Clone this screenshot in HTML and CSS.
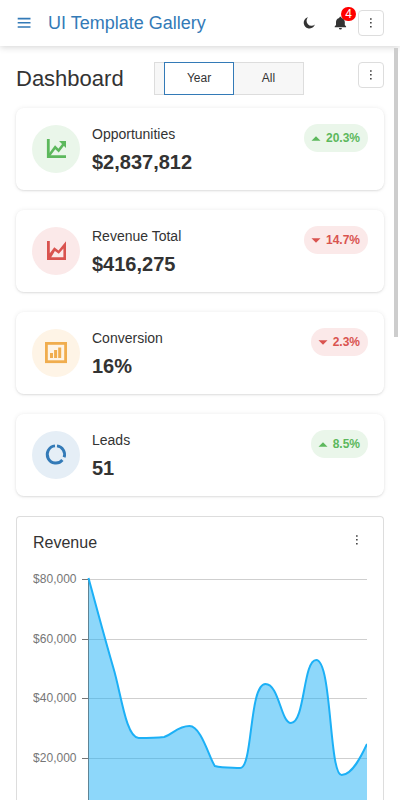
FILE: index.html
```html
<!DOCTYPE html>
<html lang="en">
<head>
<meta charset="utf-8">
<title>UI Template Gallery</title>
<link rel="stylesheet" href="styles.css">
</head>
<body>
<header class="topbar">
  <svg class="menu" width="16" height="16" viewBox="0 0 16 16"><path d="M1.7 3.6h12.8M1.7 7.8h12.8M1.7 12h12.8" stroke="#337ab7" stroke-width="1.6"/></svg>
  <div class="brand">UI Template Gallery</div>
  <svg class="moon" width="14" height="14" viewBox="0 0 14 14"><path d="M6.1 1.2A5.7 5.7 0 1 0 12.9 8.4A4.5 4.5 0 0 1 6.1 1.2Z" fill="#333"/></svg>
  <div class="bell">
    <svg width="14" height="16" viewBox="0 0 14 16"><path d="M7.4 1.7c.7 0 1.1.5 1.1 1.2C10.7 3.4 11.8 5 11.8 7v3l1.3 1.4v.9H1.7v-.9L3 10V7c0-2 1.1-3.6 3.3-4.1 0-.7.4-1.2 1.1-1.2ZM5.9 13h3a1.5 1.5 0 0 1-3 0Z" fill="#333"/></svg>
    <span class="count">4</span>
  </div>
  <button class="more" aria-label="More"><svg width="4" height="12" viewBox="0 0 4 12"><path d="M1.1 1.2h1.5v1.5H1.1zM1.1 5.1h1.5v1.5H1.1zM1.1 9h1.5v1.5H1.1z" fill="#333"/></svg></button>
</header>
<main>
  <div class="heading">
    <h1>Dashboard</h1>
    <div class="tabs"><span class="stub"></span><span class="tab active">Year</span><span class="tab">All</span></div>
    <button class="more" aria-label="More"><svg width="4" height="12" viewBox="0 0 4 12"><path d="M1.1 1.2h1.5v1.5H1.1zM1.1 5.1h1.5v1.5H1.1zM1.1 9h1.5v1.5H1.1z" fill="#333"/></svg></button>
  </div>
  <section class="card">
    <div class="icon green"><svg width="24" height="24" viewBox="0 0 24 24"><path d="M4.3 2v17.6H22" fill="none" stroke="#5cb85c" stroke-width="2.8"/><path d="M5 18.5L11.2 10.3L14.6 13.6L19.7 7" fill="none" stroke="#5cb85c" stroke-width="2.6"/><path d="M15 4H22v7Z" fill="#5cb85c"/></svg></div>
    <div class="info"><div class="name">Opportunities</div><div class="value">$2,837,812</div></div>
    <div class="pill green"><svg width="10" height="5" viewBox="0 0 10 5"><path d="M.5 4.7L5 .3l4.5 4.4Z" fill="#5cb85c"/></svg>20.3%</div>
  </section>
  <section class="card">
    <div class="icon red"><svg width="24" height="24" viewBox="0 0 24 24"><path d="M3 2h2.8v12.2L10.3 8.2l4.2 3.2L22 2.3V21H3ZM7.2 18.3h12.2V9.4L14.8 14.8l-3.9-2.7Z" fill="#d9534f" fill-rule="evenodd"/></svg></div>
    <div class="info"><div class="name">Revenue Total</div><div class="value">$416,275</div></div>
    <div class="pill red"><svg width="10" height="5" viewBox="0 0 10 5"><path d="M.5 .3h9L5 4.7Z" fill="#d9534f"/></svg>14.7%</div>
  </section>
  <section class="card">
    <div class="icon orange"><svg width="24" height="24" viewBox="0 0 24 24"><rect x="2.4" y="2.4" width="19.2" height="18.3" fill="none" stroke="#f0ad4e" stroke-width="2.8"/><path d="M6 11.9h3V17H6zM10.1 9.1h3V17h-3zM14.2 6.5h3V17h-3z" fill="#f0ad4e"/></svg></div>
    <div class="info"><div class="name">Conversion</div><div class="value">16%</div></div>
    <div class="pill red"><svg width="10" height="5" viewBox="0 0 10 5"><path d="M.5 .3h9L5 4.7Z" fill="#d9534f"/></svg>2.3%</div>
  </section>
  <section class="card">
    <div class="icon blue"><svg width="24" height="24" viewBox="0 0 24 24"><path d="M13 2.9A8.6 8.6 0 0 1 20.1 14.3M18.4 17A8.6 8.6 0 1 1 11 2.9" fill="none" stroke="#337ab7" stroke-width="2.9"/></svg></div>
    <div class="info"><div class="name">Leads</div><div class="value">51</div></div>
    <div class="pill green"><svg width="10" height="5" viewBox="0 0 10 5"><path d="M.5 4.7L5 .3l4.5 4.4Z" fill="#5cb85c"/></svg>8.5%</div>
  </section>
  <section class="panel">
    <div class="panel-head"><h2>Revenue</h2><svg width="4" height="12" viewBox="0 0 4 12"><path d="M1.1 1.2h1.5v1.5H1.1zM1.1 5.1h1.5v1.5H1.1zM1.1 9h1.5v1.5H1.1z" fill="#333"/></svg></div>
    <svg class="chart" width="334" height="241" viewBox="33 559 334 241">
      <path d="M88 579.5H367M88 639.5H367M88 698.5H367M88 758.5H367" stroke="#cfcfcf"/>
      <path d="M82 579.5H88M82 639.5H88M82 698.5H88M82 758.5H88M88.5 579V800" stroke="#767676" fill="none"/>
      <path d="M88.5 578C95 602 106 643 113.4 668C121 693 126 738 138.7 738C150 738 155 738 164.1 737C173 734 178 726 189.5 726C201 726 209 757 214.8 766C223 768 231 767.5 240.2 768C253 768 249 684 265.5 684C279 684 281 723 290.9 723C305 723 303 660 316.2 660C332 660 329 775 341.6 775C352 775 361 757 367 744V800H88.5Z" fill="#1cb0f6" fill-opacity=".5"/>
      <path d="M88.5 578C95 602 106 643 113.4 668C121 693 126 738 138.7 738C150 738 155 738 164.1 737C173 734 178 726 189.5 726C201 726 209 757 214.8 766C223 768 231 767.5 240.2 768C253 768 249 684 265.5 684C279 684 281 723 290.9 723C305 723 303 660 316.2 660C332 660 329 775 341.6 775C352 775 361 757 367 744" fill="none" stroke="#1cb0f6" stroke-width="2"/>
      <g class="axis"><text x="76.5" y="583">$80,000</text><text x="76.5" y="643">$60,000</text><text x="76.5" y="702">$40,000</text><text x="76.5" y="762">$20,000</text></g>
    </svg>
  </section>
</main>
<div class="scrollbar"></div>
</body>
</html>
```
FILE: styles.css
```css
* { box-sizing: border-box; }
body { margin: 0; height: 800px; overflow: hidden; background: #fff; color: #333; font-family: "Liberation Sans", Arial, sans-serif; font-size: 14px; }
.topbar { position: relative; display: flex; align-items: center; height: 46px; padding: 0 16px; box-shadow: 0 1px 7px rgba(0,0,0,.18); }
.menu { margin-top: -1px; }
.brand { flex: 1; margin-left: 16px; font-size: 18px; line-height: 24px; color: #337ab7; }
.moon { margin-right: 17px; }
.bell { position: relative; display: flex; width: 14px; margin-right: 11px; }
.count { position: absolute; left: 8px; top: -8px; width: 15px; height: 14px; border-radius: 7px; background: red; color: #fff; font-size: 12px; line-height: 14px; text-align: center; }
.more { display: flex; align-items: center; justify-content: center; width: 26px; height: 26px; padding: 0; border: 1px solid #ddd; border-radius: 4px; background: #fff; }
main { padding: 16px 16px 0; }
.heading { display: flex; align-items: flex-start; height: 46px; }
h1 { width: 138px; margin: 3px 0 0; font-size: 22px; font-weight: 400; line-height: 28px; }
.tabs { display: flex; width: 150px; height: 33px; }
.stub { width: 10px; background: #f7f7f7; border: 1px solid #ddd; border-right: 0; }
.tab { width: 70px; border: 1px solid #ddd; border-left: 0; background: #f7f7f7; font-size: 12px; line-height: 31px; text-align: center; }
.tab.active { border: 1px solid #337ab7; background: #fff; }
.heading .more { margin-left: auto; }
.card { display: flex; height: 82px; margin-bottom: 20px; padding: 16px; border-radius: 8px; box-shadow: 0 1px 2px rgba(0,0,0,.1), 0 0 5px rgba(0,0,0,.07); }
.icon { display: flex; align-items: center; justify-content: center; width: 48px; height: 48px; margin: 1px 12px 0 0; border-radius: 50%; }
.green { background: #eaf6ea; color: #5cb85c; }
.red { background: #fbe9e9; color: #d9534f; }
.orange { background: #fef4e6; }
.blue { background: #e5eef6; }
.info { flex: 1; }
.name { line-height: 20px; }
.value { margin-top: 6px; font-size: 20px; font-weight: 700; line-height: 24px; }
.pill { display: flex; align-items: center; gap: 5px; height: 28px; padding: 0 8px 0 7px; border-radius: 14px; font-size: 12px; font-weight: 700; }
.panel { height: 284px; padding: 16px 16px 0; border: 1px solid #ddd; border-bottom: 0; border-radius: 4px 4px 0 0; }
.panel-head { display: flex; justify-content: space-between; height: 26px; padding-right: 8px; }
.panel-head svg { margin-top: 1px; }
h2 { margin: 0; font-size: 16px; font-weight: 400; line-height: 19px; }
.chart { display: block; }
.axis { font-size: 12px; fill: #767676; text-anchor: end; }
.scrollbar { position: absolute; left: 394px; top: 48px; width: 4px; height: 289px; background: #cdcdcd; }
```
